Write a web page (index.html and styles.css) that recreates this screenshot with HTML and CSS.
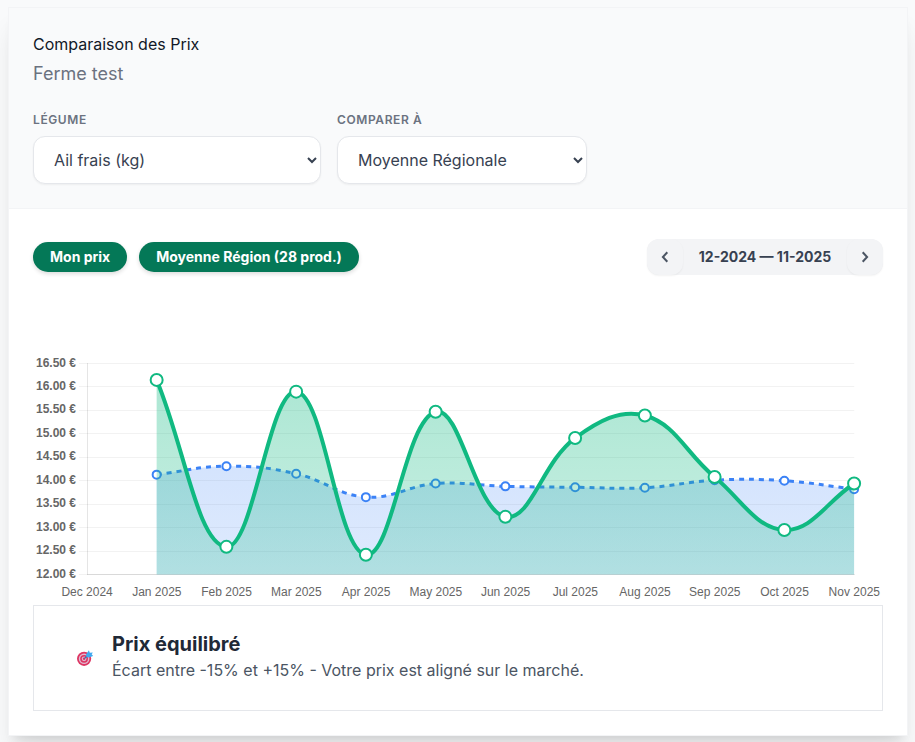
FILE: index.html
```html
<!DOCTYPE html>
<html lang="fr">
<head>
<meta charset="utf-8">
<title>Comparaison des Prix</title>
<link rel="stylesheet" href="styles.css">
</head>
<body>
<main class="card">
  <header class="card-header">
    <h1 class="title">Comparaison des Prix</h1>
    <p class="subtitle">Ferme test</p>
    <div class="filters">
      <label class="field field-vegetable">
        <span class="field-label">LÉGUME</span>
        <select class="select"><option>Ail frais (kg)</option></select>
      </label>
      <label class="field field-compare">
        <span class="field-label">COMPARER À</span>
        <select class="select"><option>Moyenne Régionale</option></select>
      </label>
    </div>
  </header>
  <section class="card-body">
    <div class="toolbar">
      <div class="pills">
        <button class="pill">Mon prix</button>
        <button class="pill">Moyenne Région (28 prod.)</button>
      </div>
      <div class="period">
        <button class="period-btn" aria-label="Précédent"><svg width="16" height="16" viewBox="0 0 16 16"><path d="M10.3 3.3 5.9 8l4.4 4.7"/></svg></button>
        <span class="period-text">12-2024 — 11-2025</span>
        <button class="period-btn" aria-label="Suivant"><svg width="16" height="16" viewBox="0 0 16 16"><path d="M5.7 3.3 10.1 8l-4.4 4.7"/></svg></button>
      </div>
    </div>
    <svg class="chart" id="chart" width="850" height="305" viewBox="0 0 850 305">
      <defs>
        <linearGradient id="mine" gradientUnits="userSpaceOnUse" x1="0" y1="0" x2="0" y2="305">
          <stop offset="0" stop-color="#10b981" stop-opacity=".4"/>
          <stop offset="1" stop-color="#10b981" stop-opacity=".2"/>
        </linearGradient>
        <linearGradient id="region" gradientUnits="userSpaceOnUse" x1="0" y1="0" x2="0" y2="305">
          <stop offset="0" stop-color="#3b82f6" stop-opacity=".3"/>
          <stop offset="1" stop-color="#3b82f6" stop-opacity=".15"/>
        </linearGradient>
      </defs>
    </svg>
    <div class="verdict">
      <svg class="target" width="16" height="16" viewBox="0 0 16 16">
        <circle cx="7.1" cy="8.8" r="7.1" fill="#dd3562"/>
        <circle cx="7.1" cy="8.8" r="5.3" fill="#dfb9d0"/>
        <circle cx="7.1" cy="8.8" r="3.9" fill="#dd3562"/>
        <circle cx="7.1" cy="8.8" r="2.4" fill="#dfb9d0"/>
        <circle cx="7.1" cy="8.8" r="1.2" fill="#dd3562"/>
        <path d="m7.4 8.6 4.4-4.5" stroke="#2876b8" stroke-width="1.3"/>
        <path d="m9 4.4 2.9-4.2.9 2.6L15.8 2.4l-1.1 2 1.5 1.5-4 1.6-2.8-.6z" fill="#42a9f0"/>
      </svg>
      <div class="verdict-body">
        <h2 class="verdict-title">Prix équilibré</h2>
        <p class="verdict-text">Écart entre -15% et +15% - Votre prix est aligné sur le marché.</p>
      </div>
    </div>
  </section>
</main>
<script src="chart.js"></script>
</body>
</html>
```
FILE: styles.css
```css
* { box-sizing: border-box; }
body {
  margin: 0;
  padding: 7px 8px 0;
  height: 742px;
  overflow: hidden;
  background: #f9fafb;
  font-family: Inter, "Liberation Sans", sans-serif;
  font-size: 16px;
  color: #1f2937;
}
h1, h2, p { margin: 0; }
button, select { font-family: inherit; }
.card {
  width: 900px;
  height: 729px;
  background: #fff;
  border: 1px solid #f3f4f6;
  box-shadow: 0 20px 25px -5px rgba(0, 0, 0, .1), 0 8px 10px -6px rgba(0, 0, 0, .1);
}
.card-header {
  height: 201px;
  padding: 24px;
  background: #f9fafb;
  border-bottom: 1px solid #f3f4f6;
}
.title { font-size: 16px; line-height: 24px; font-weight: 400; color: #111827; }
.subtitle { margin-top: 4px; font-size: 18px; line-height: 28px; color: #6b7280; }
.filters { display: flex; gap: 16px; margin-top: 24px; }
.field { display: block; }
.field-vegetable { width: 288px; }
.field-compare { width: 250px; }
.field-label {
  display: block;
  margin-bottom: 8px;
  font-size: 12px;
  line-height: 16px;
  font-weight: 600;
  letter-spacing: .6px;
  color: #6b7280;
}
.select {
  display: block;
  width: 100%;
  height: 48px;
  padding: 0 0 0 16px;
  border: 1px solid #e5e7eb;
  border-radius: 12px;
  background: #fff;
  color: #374151;
  font-size: 16px;
  box-shadow: 0 1px 2px rgba(0, 0, 0, .05);
}
.card-body { padding: 30px 24px 24px; }
.toolbar { display: flex; align-items: center; justify-content: space-between; height: 36px; }
.pills { display: flex; gap: 12px; }
.pill {
  height: 30px;
  padding: 0 17px 2px;
  border: 0;
  border-radius: 15px;
  background: #047857;
  color: #fff;
  font-size: 14px;
  font-weight: 700;
  white-space: nowrap;
  box-shadow: 0 2px 4px rgba(0, 0, 0, .14);
}
.period { display: flex; width: 236px; height: 36px; border-radius: 12px; background: #f3f4f6; }
.period-btn {
  display: flex;
  align-items: center;
  justify-content: center;
  width: 36px;
  height: 36px;
  padding: 0;
  border: 0;
  border-radius: 12px;
  background: #f3f4f6;
  box-shadow: 0 1px 2px rgba(0, 0, 0, .05);
}
.period-btn path { fill: none; stroke: #4b5563; stroke-width: 2; }
.period-text { flex: 1; text-align: center; font-size: 14px; line-height: 36px; font-weight: 700; color: #374151; white-space: nowrap; }
.chart { display: block; margin-top: 25px; overflow: visible; font-family: "Liberation Sans", Arial, sans-serif; font-size: 12px; }
.chart text { fill: #666; }
.chart .y-label { font-weight: 700; text-anchor: end; }
.chart .x-label { text-anchor: middle; }
.grid-line { stroke: rgba(0, 0, 0, .05); }
.axis { stroke: rgba(0, 0, 0, .1); }
.line-mine { fill: none; stroke: #10b981; stroke-width: 4; }
.line-region { fill: none; stroke: #3b82f6; stroke-width: 3; stroke-dasharray: 5 5; }
.dot-mine { fill: #fff; stroke: #10b981; stroke-width: 2; }
.dot-region { fill: #fff; stroke: #3b82f6; stroke-width: 2; }
.verdict { display: flex; align-items: center; height: 106px; padding: 0 43px; border: 1px solid #e5e7eb; }
.target { margin-right: 19px; }
.verdict-body { padding-bottom: 4px; }
.verdict-title { font-size: 20px; line-height: 28px; font-weight: 700; color: #1f2937; }
.verdict-text { font-size: 16px; line-height: 24px; color: #4b5563; }
```
FILE: chart.js
```js
const svg = document.getElementById("chart");
const NS = "http://www.w3.org/2000/svg";
const left = 54.5, right = 821.3, top_ = 63.5, bottom = 274.5;
const plotLeft = 54.1, step = (right - plotLeft) / 11;
const months = ["Dec 2024", "Jan 2025", "Feb 2025", "Mar 2025", "Apr 2025", "May 2025",
  "Jun 2025", "Jul 2025", "Aug 2025", "Sep 2025", "Oct 2025", "Nov 2025"];
const mine = [16.15, 12.59, 15.9, 12.42, 15.47, 13.23, 14.91, 15.39, 14.08, 12.95, 13.94];
const region = [14.13, 14.31, 14.15, 13.65, 13.94, 13.88, 13.86, 13.85, 14.01, 14, 13.82];

function add(name, attrs, text) {
  const el = document.createElementNS(NS, name);
  for (const key in attrs) el.setAttribute(key, attrs[key]);
  if (text) el.textContent = text;
  svg.appendChild(el);
}
const yOf = v => bottom - (v - 12) / 4.5 * (bottom - top_);

for (let i = 0; i < 10; i++) {
  const v = 12 + i * 0.5;
  const y = Math.floor(yOf(v)) + 0.5;
  add("line", { class: "grid-line", x1: 46, x2: right, y1: y, y2: y });
  add("text", { class: "y-label", x: 43, y: Math.floor(yOf(v) - 0.5) + 4 }, v.toFixed(2) + " €");
}
add("line", { class: "axis", x1: left, x2: left, y1: top_ - 0.5, y2: bottom + 0.5 });
add("line", { class: "axis", x1: left, x2: right + 0.5, y1: bottom, y2: bottom });
months.forEach((m, i) => add("text", { class: "x-label", x: plotLeft + i * step, y: 296 }, m));

// Bézier spline with distance-weighted tangents, tension 0.4
function curve(pts) {
  const dist = (a, b) => Math.hypot(a[0] - b[0], a[1] - b[1]);
  const ctl = pts.map((p, i) => {
    const a = pts[i - 1] || p, b = pts[i + 1] || p;
    const d1 = dist(a, p), d2 = dist(p, b);
    const f1 = 0.4 * d1 / (d1 + d2), f2 = 0.4 * d2 / (d1 + d2);
    const dx = b[0] - a[0], dy = b[1] - a[1];
    return [[p[0] - f1 * dx, p[1] - f1 * dy], [p[0] + f2 * dx, p[1] + f2 * dy]];
  });
  return "M" + pts[0] + pts.slice(1).map((p, i) => "C" + [ctl[i][1], ctl[i + 1][0], p].join(" ")).join("");
}
function series(values, name, radius) {
  const pts = values.map((v, i) => [plotLeft - 0.2 + (i + 1) * step, yOf(v)]);
  const d = curve(pts);
  add("path", { d: d + "V" + bottom + "H" + pts[0][0] + "Z", fill: "url(#" + name + ")" });
  add("path", { d, class: "line-" + name });
  pts.forEach(p => add("circle", { cx: p[0], cy: p[1], r: radius, class: "dot-" + name }));
}
series(region, "region", 4);
series(mine, "mine", 6);
```
